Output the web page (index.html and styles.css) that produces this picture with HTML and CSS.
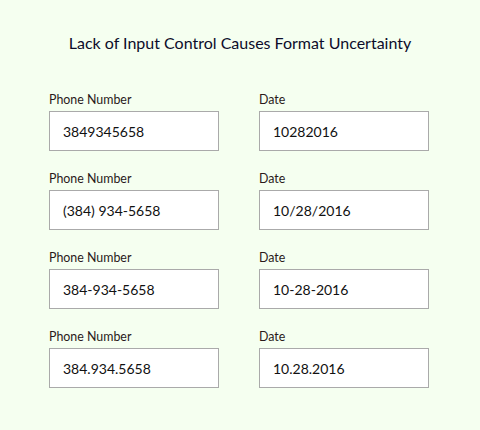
FILE: index.html
```html
<!DOCTYPE html>
<html>
<head>
<meta charset="utf-8">
<link rel="stylesheet" href="styles.css">
</head>
<body>
<div class="page">
  <h1 class="title">Lack of Input Control Causes Format Uncertainty</h1>
  <div class="grid">
    <div class="field"><div class="label">Phone Number</div><div class="box">3849345658</div></div>
    <div class="field"><div class="label">Date</div><div class="box">10282016</div></div>
    <div class="field"><div class="label">Phone Number</div><div class="box">(384) 934-5658</div></div>
    <div class="field"><div class="label">Date</div><div class="box">10/28/2016</div></div>
    <div class="field"><div class="label">Phone Number</div><div class="box">384-934-5658</div></div>
    <div class="field"><div class="label">Date</div><div class="box">10-28-2016</div></div>
    <div class="field"><div class="label">Phone Number</div><div class="box">384.934.5658</div></div>
    <div class="field"><div class="label">Date</div><div class="box">10.28.2016</div></div>
  </div>
</div>
</body>
</html>
```
FILE: styles.css
```css
html, body {
  margin: 0;
  padding: 0;
  background: #f5fff0;
}
body {
  width: 480px;
  height: 430px;
  font-family: Lato, "Liberation Sans", sans-serif;
  color: #111122;
}
.page {
  padding-top: 33px;
}
.title {
  margin: 0;
  font-size: 16px;
  font-weight: 400;
  line-height: 20px;
  text-align: center;
  color: #0c0c2a;
}
.grid {
  margin-top: 39px;
  margin-left: 49px;
  display: grid;
  grid-template-columns: 170px 170px;
  column-gap: 40px;
  row-gap: 20px;
}
.field {
  display: flex;
  flex-direction: column;
}
.label {
  font-size: 12.4px;
  line-height: 15px;
  height: 19px;
  color: #2a1a1a;
}
.box {
  box-sizing: border-box;
  height: 40px;
  border: 1px solid #aaaaaa;
  background: #ffffff;
  padding-left: 13px;
  display: flex;
  align-items: center;
  font-size: 14px;
  color: #111111;
}
```
